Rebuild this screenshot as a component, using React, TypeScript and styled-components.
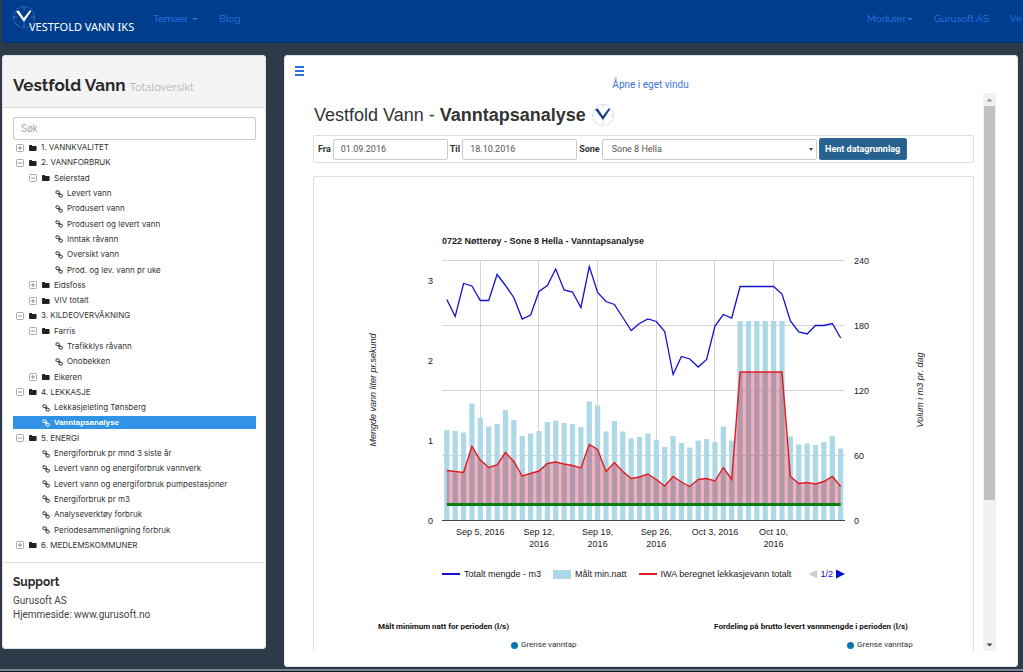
import React from "react";
import styled, { createGlobalStyle } from "styled-components";

const raleway = `Raleway, Lato, "Open Sans", sans-serif`;
const roboto = `Roboto, "Liberation Sans", sans-serif`;
const arial = `"Liberation Sans", Arial, sans-serif`;
const inter = `Inter, "Liberation Sans", sans-serif`;

const GlobalStyle = createGlobalStyle`
  *, *::before, *::after { box-sizing: border-box; }
  body { margin: 0; background: #2c3a4a; color: #333; font-family: ${roboto}; overflow: hidden; }
  a { text-decoration: none; }
  h1, h2, p, ul { margin: 0; padding: 0; }
`;

/* ---------- page frame ---------- */

const Page = styled.div`
  display: flex;
  flex-direction: column;
  height: 100vh;
  min-height: 660px;
  border-bottom: 1px solid #10161d;
`;

const Navbar = styled.header`
  flex: none;
  display: flex;
  align-items: flex-start;
  justify-content: space-between;
  height: 43px;
  margin-left: 2px;
  padding-left: 10px;
  background: #003d8c;
  border-bottom: 1px solid #00306f;
  border-bottom-left-radius: 3px;
  overflow: hidden;
  white-space: nowrap;
`;

const NavGroup = styled.nav`
  display: flex;
  align-items: flex-start;
  gap: 21px;
  padding-top: 11px;
`;

const NavStart = styled.div`
  display: flex;
  align-items: flex-start;
  gap: 19px;
`;

const NavEnd = styled(NavGroup)`
  width: 156px;
  flex: none;
`;

const NavLink = styled.a`
  display: flex;
  flex: none;
  align-items: center;
  gap: 4px;
  font: 10px/16px ${raleway};
  color: #2d79ee;
`;

const Caret = styled.span<{ $tight?: boolean }>`
  border: 3px solid transparent;
  border-top: 2px solid currentColor;
  border-bottom: 0;
  margin-left: ${(p) => (p.$tight ? -3 : 0)}px;
`;

const Brand = styled.a`
  display: flex;
  align-items: flex-start;
  padding-top: 5px;
  color: #fff;
`;

const BrandName = styled.span`
  margin: 14px 0 0 -7px;
  font: 11px/16px "Noto Sans", "Open Sans", sans-serif;
`;

const Columns = styled.div`
  flex: 1;
  min-height: 0;
  display: flex;
  align-items: flex-start;
  gap: 18px;
  padding: 12px 5px 2px 2px;
`;

const FootLine = styled.div`
  flex: none;
  height: 2px;
  background: #7c8796;
`;

/* ---------- sidebar ---------- */

const Sidebar = styled.aside`
  flex: none;
  width: 264px;
  background: #fff;
  border: 1px solid #e2e4e7;
  border-radius: 3px;
  padding-bottom: 26px;
`;

const SideHeader = styled.div`
  padding: 17px 10px 10px;
  background: #f4f4f4;
  border-bottom: 1px solid #ddd;
`;

const SideTitle = styled.h1`
  height: 24px;
  font: 700 17px/24px ${raleway};
  color: #2b2b2b;
`;

const Muted = styled.small`
  font-size: 11px;
  line-height: 16px;
  font-weight: 400;
  color: #b3b3b3;
`;

const SideBody = styled.div`
  padding: 9px 9px 9px 10px;
  border-bottom: 1px solid #ddd;
`;

const Search = styled.input`
  display: block;
  width: 100%;
  height: 23px;
  padding: 0 7px;
  border: 1px solid #ccc;
  border-radius: 2px;
  font: 10px/16px ${roboto};
  color: #555;
  &::placeholder { color: #aaa; opacity: 1; }
`;

const Tree = styled.ul`
  display: grid;
  grid-auto-rows: 1fr;
  height: 413px;
  list-style: none;
`;

const TreeItem = styled.li<{ $level: number; $active?: boolean }>`
  align-self: center;
  display: flex;
  align-items: center;
  height: 13px;
  padding-left: ${(p) => 3 + p.$level * 13}px;
  background: ${(p) => (p.$active ? "#3193e6" : "transparent")};
  font: ${(p) => (p.$active ? 700 : 400)} 8px/13px ${(p) => (p.$active ? arial : inter)};
  color: ${(p) => (p.$active ? "#fff" : "#333")};
  white-space: nowrap;
`;

const Toggle = styled.button`
  flex: none;
  width: 13px;
  height: 8px;
  padding: 0;
  border: 0;
  background: none;
  display: flex;
`;

const Blank = styled.span`
  flex: none;
  width: 13px;
`;

const IconCell = styled.span`
  flex: none;
  width: 12px;
  display: flex;
`;

const TreeLink = styled.a`
  color: inherit;
`;

const Support = styled.section`
  padding: 11px 10px 0;
  font: 10px/14px ${roboto};
  color: #444;
`;

const SupportTitle = styled.h2`
  margin-bottom: 4px;
  font: 700 12px/16px ${raleway};
  color: #2b2b2b;
`;

/* ---------- main panel ---------- */

const Main = styled.main`
  flex: 1;
  min-width: 0;
  align-self: stretch;
  display: flex;
  flex-direction: column;
  background: #fff;
  border: 1px solid #e2e4e7;
  border-radius: 3px;
  padding: 10px 21px 15px 10px;
`;

const MenuButton = styled.button`
  flex: none;
  width: 9px;
  height: 10px;
  padding: 0;
  border: 0;
  border-top: 2px solid #2a70dc;
  border-bottom: 2px solid #2a70dc;
  background: linear-gradient(#2a70dc, #2a70dc) center / 100% 2px no-repeat;
`;

const OpenLink = styled.a`
  align-self: center;
  margin: 2px 0 1px 10px;
  font: 10px/14px ${roboto};
  color: #3b73d9;
`;

const Frame = styled.div`
  flex: 1;
  min-height: 0;
  display: flex;
  gap: 9px;
  padding-left: 18px;
`;

const Report = styled.div`
  flex: 1;
  min-width: 0;
  overflow: hidden;
`;

const ReportTitle = styled.h2`
  display: flex;
  align-items: center;
  gap: 5px;
  height: 42px;
  padding: 2px 0 0 1px;
  font: 400 18px/24px ${arial};
  color: #333;
  white-space: nowrap;
`;

const FilterBar = styled.form`
  display: flex;
  align-items: center;
  gap: 2px;
  height: 28px;
  padding: 0 4px;
  border: 1px solid #ddd;
  border-radius: 2px;
`;

const FilterLabel = styled.label`
  flex: none;
  font: 700 9px/12px ${roboto};
  color: #333;
`;

const DateInput = styled.input`
  width: 115px;
  height: 21px;
  padding: 0 7px;
  border: 1px solid #ccc;
  border-radius: 2px;
  font: 9px/12px ${roboto};
  color: #555;
`;

const SelectBox = styled.div`
  width: 215px;
  display: grid;
  align-items: center;
  justify-items: end;
  & > * { grid-area: 1 / 1; }
`;

const ZoneSelect = styled.select`
  appearance: none;
  width: 100%;
  height: 21px;
  padding: 0 9px;
  border: 1px solid #ccc;
  border-radius: 2px;
  background: #fff;
  font: 9px/12px ${roboto};
  color: #555;
`;

const SelectArrow = styled.span`
  margin-right: 4px;
  border: 2px solid transparent;
  border-top: 3px solid #444;
  border-bottom: 0;
  pointer-events: none;
`;

const SubmitButton = styled.button`
  flex: none;
  width: 88px;
  height: 22px;
  padding: 0;
  border: 1px solid #2e6da4;
  border-radius: 2px;
  background: #286090;
  font: 700 9px/12px ${roboto};
  color: #fff;
`;

const ChartCard = styled.section`
  margin-top: 13px;
  border: 1px solid #ddd;
  border-radius: 2px;
  height: 600px;
`;

const ChartColumn = styled.div`
  width: 565px;
  margin: 0 auto;
`;

const Legend = styled.div`
  display: flex;
  align-items: center;
  gap: 12px;
  height: 12px;
  margin-top: 18px;
  padding: 0 81px;
  font: 9px/12px ${arial};
  color: #222;
  white-space: nowrap;
`;

const LegendEntry = styled.span`
  display: flex;
  align-items: center;
  gap: 4px;
`;

const Swatch = styled.span<{ $color: string; $solid?: boolean }>`
  flex: none;
  width: 18px;
  height: ${(p) => (p.$solid ? 9 : 2)}px;
  background: ${(p) => p.$color};
`;

const Pager = styled.span`
  display: flex;
  align-items: center;
  gap: 3px;
  margin-left: auto;
  color: #0011cc;
`;

const PagerButton = styled.button<{ $next?: boolean }>`
  width: 9px;
  height: 9px;
  padding: 0;
  border: 0;
  background: ${(p) => (p.$next ? "#0011cc" : "#ccc")};
  clip-path: ${(p) => (p.$next ? "polygon(0 0, 100% 50%, 0 100%)" : "polygon(100% 0, 0 50%, 100% 100%)")};
`;

const SmallCharts = styled.div`
  display: grid;
  grid-template-columns: 51% 49%;
  margin-top: 41px;
  white-space: nowrap;
`;

const SmallChart = styled.div`
  padding-left: 64px;
`;

const SmallTitle = styled.div`
  font: 700 8px/12px ${roboto};
  color: #111;
`;

const SmallLegend = styled.div`
  display: flex;
  align-items: center;
  gap: 3px;
  margin: 6px 0 0 133px;
  font: 8px/12px ${roboto};
  color: #333;
`;

const Dot = styled.span`
  width: 7px;
  height: 7px;
  border-radius: 50%;
  background: #0b75b5;
`;

const ScrollTrack = styled.div`
  flex: none;
  width: 13px;
  display: flex;
  flex-direction: column;
  align-items: center;
  background: #f1f1f1;
`;

const ScrollButton = styled.button`
  width: 13px;
  height: 13px;
  padding: 0;
  border: 0;
  background: none;
  display: flex;
  align-items: center;
  justify-content: center;
`;

const ScrollRail = styled.div`
  flex: 1;
  width: 11px;
`;

const ScrollThumb = styled.div`
  height: 74%;
  background: #c1c1c1;
`;

const SvgText = styled.text<{ $weight?: number; $italic?: boolean }>`
  font: ${(p) => (p.$italic ? "italic" : "normal")} ${(p) => p.$weight ?? 400} 9px ${arial};
  fill: #222;
`;

/* ---------- icons ---------- */

const ToggleIcon = ({ open }: { open: boolean }) => (
  <svg width="8" height="8" viewBox="0 0 8 8" fill="none" stroke="#999">
    <rect x="0.5" y="0.5" width="7" height="7" rx="1" stroke="#aaa" />
    <path d={open ? "M2 4H6" : "M2 4H6M4 2V6"} strokeWidth="0.8" stroke="#777" />
  </svg>
);

const FolderIcon = () => (
  <svg width="8" height="8" viewBox="0 0 8 8" fill="#222">
    <path d="M0 1.8Q0 1 .8 1H2.4Q3.2 1 3.2 2H6.8Q7.6 2 7.6 2.8V6.2Q7.6 7 6.8 7H.8Q0 7 0 6.2Z" />
  </svg>
);

const LinkIcon = () => (
  <svg width="8" height="8" viewBox="0 0 8 8" fill="none" stroke="currentColor" strokeWidth="0.9">
    <rect x="0.9" y="0.9" width="3.4" height="2.7" rx="1.3" transform="rotate(25 2.6 2.2)" />
    <rect x="4" y="4.3" width="3.4" height="2.7" rx="1.3" transform="rotate(25 5.7 5.6)" />
    <path d="M2.8 3.2Q3.2 4.6 4.6 4.4M4.2 2.8Q5.2 3.2 5 4.4" />
  </svg>
);

const Compass = ({ ring, mark }: { ring: string; mark: string }) => (
  <svg width="24" height="24" viewBox="0 0 24 24" fill="none" style={{ flex: "none" }}>
    <circle cx="12" cy="12" r="10.5" stroke={ring} strokeWidth="0.7" strokeDasharray="4 1" />
    <path d="M12 1V6M12 17V23M1 12H5M19 12H23M19 19L20 20M4 20L5 19" stroke={ring} strokeWidth="0.8" />
    <path d="M4 6.2L6.8 5.4L11.8 13L17.8 5.2L19.4 6L12 17Z" fill={mark} />
  </svg>
);

/* ---------- data ---------- */

type Node = { label: string; level: number; open?: boolean; active?: boolean };

const nodes: Node[] = [
  { label: "1. VANNKVALITET", level: 0, open: false },
  { label: "2. VANNFORBRUK", level: 0, open: true },
  { label: "Seierstad", level: 1, open: true },
  { label: "Levert vann", level: 2 },
  { label: "Produsert vann", level: 2 },
  { label: "Produsert og levert vann", level: 2 },
  { label: "Inntak råvann", level: 2 },
  { label: "Oversikt vann", level: 2 },
  { label: "Prod. og lev. vann pr uke", level: 2 },
  { label: "Eidsfoss", level: 1, open: false },
  { label: "VIV totalt", level: 1, open: false },
  { label: "3. KILDEOVERVÅKNING", level: 0, open: true },
  { label: "Farris", level: 1, open: true },
  { label: "Trafikklys råvann", level: 2 },
  { label: "Onobekken", level: 2 },
  { label: "Eikeren", level: 1, open: false },
  { label: "4. LEKKASJE", level: 0, open: true },
  { label: "Lekkasjeleting Tønsberg", level: 1 },
  { label: "Vanntapsanalyse", level: 1, active: true },
  { label: "5. ENERGI", level: 0, open: true },
  { label: "Energiforbruk pr mnd 3 siste år", level: 1 },
  { label: "Levert vann og energiforbruk vannverk", level: 1 },
  { label: "Levert vann og energiforbruk pumpestasjoner", level: 1 },
  { label: "Energiforbruk pr m3", level: 1 },
  { label: "Analyseverktøy forbruk", level: 1 },
  { label: "Periodesammenligning forbruk", level: 1 },
  { label: "6. MEDLEMSKOMMUNER", level: 0, open: false },
];

// One value per day from 1 September, as height above the axis (260 = 240 m3).
const total = [
  221, 204, 237, 234.5, 220, 220, 246, 235, 223, 201.5, 205.5, 229, 235, 251.5, 230.5, 228.5, 213, 254,
  228, 219, 216, 203, 190, 197, 201.5, 199, 189, 146, 164, 161.5, 153.5, 161, 194.5, 206, 202.5,
  234, 234, 234, 234, 234, 226.5, 199.5, 188.5, 186.5, 195, 195, 197, 182.5,
];
const night = [
  90.5, 89.5, 88, 117, 102.5, 94, 96.5, 110.5, 100.5, 84.5, 87, 89.5, 98.5, 100, 97.5, 96.5, 93.5, 119,
  115, 89, 99.5, 89, 82, 83.5, 87, 80.5, 73.5, 84.5, 77.5, 73, 80, 81.5, 78.5, 94, 80,
  199.5, 199.5, 199.5, 199.5, 199.5, 199.5, 84, 76, 77, 75.5, 78.5, 84.5, 72,
];
const leak = [
  50, 49, 48, 74, 60.5, 53, 55.5, 68, 59, 44.5, 47, 49.5, 57, 58.5, 56.5, 55, 52.5, 76,
  71, 49, 58, 49, 42, 43.5, 46.5, 41, 34.5, 44, 38.5, 34, 41, 42, 39.5, 53, 41,
  148.5, 148.5, 148.5, 148.5, 148.5, 148.5, 44, 37, 38, 36.5, 39, 44, 34,
];

const axisY = 343.5;
const limitY = 327.5;
const dayX = (i: number) => 85.8 + i * 8.38;
const points = (v: number[]) => v.map((h, i) => `${dayX(i).toFixed(1)},${axisY - h}`).join(" ");

const weeks: [number, string[]][] = [
  [4, ["Sep 5, 2016"]],
  [11, ["Sep 12,", "2016"]],
  [18, ["Sep 19,", "2016"]],
  [25, ["Sep 26,", "2016"]],
  [32, ["Oct 3, 2016"]],
  [39, ["Oct 10,", "2016"]],
];

const WaterChart = () => (
  <svg width="565" height="373" viewBox="0 0 565 373" style={{ display: "block" }}>
    <SvgText x="81" y="67" $weight={700}>0722 Nøtterøy - Sone 8 Hella - Vanntapsanalyse</SvgText>
    <g stroke="#d4d4d4">
      {[0, 65, 130, 195].map((h) => (
        <path key={h} d={`M81 ${83.5 + h}H484`} />
      ))}
      {weeks.map(([day]) => (
        <path key={day} d={`M${Math.floor(dayX(day)) + 0.5} 83V343`} />
      ))}
    </g>
    <g fill="#add8e6">
      {night.map((h, i) => (
        <rect key={i} x={dayX(i) - 2.6} y={axisY - h} width="5.2" height={h} />
      ))}
    </g>
    <path d="M81 343.5H484" stroke="#444" />
    <polygon points={`${dayX(0)},${limitY} ${points(leak)} ${dayX(47)},${limitY}`} fill="#c8102e" fillOpacity="0.32" />
    <polyline points={points(leak)} fill="none" stroke="#e01b22" strokeWidth="1.4" />
    <path d={`M${dayX(0)} ${limitY}H${dayX(47)}`} stroke="#0a7d12" strokeWidth="3" />
    <polyline points={points(total)} fill="none" stroke="#1410d0" strokeWidth="1.3" />
    {[0, 1, 2, 3].map((n) => (
      <SvgText key={n} x="72" y={347 - n * 80} textAnchor="end">{n}</SvgText>
    ))}
    {[0, 60, 120, 180, 240].map((n, i) => (
      <SvgText key={n} x="493" y={347 - i * 65}>{n}</SvgText>
    ))}
    {weeks.map(([day, lines]) =>
      lines.map((line, i) => (
        <SvgText key={day + line} x={dayX(day)} y={358 + i * 12} textAnchor="middle">{line}</SvgText>
      ))
    )}
    <SvgText transform="translate(15 213) rotate(-90)" textAnchor="middle" $italic>Mengde vann liter pr.sekund</SvgText>
    <SvgText transform="translate(562 213) rotate(-90)" textAnchor="middle" $italic>Volum i m3 pr. dag</SvgText>
  </svg>
);

export default function App() {
  return (
    <Page>
      <GlobalStyle />
      <Navbar>
        <NavStart>
          <Brand href="#">
            <Compass ring="#4f82c8" mark="#fff" />
            <BrandName>VESTFOLD VANN IKS</BrandName>
          </Brand>
          <NavGroup>
            <NavLink href="#">Temaer <Caret /></NavLink>
            <NavLink href="#">Blog</NavLink>
          </NavGroup>
        </NavStart>
        <NavEnd>
          <NavLink href="#">Moduler<Caret $tight /></NavLink>
          <NavLink href="#">Gurusoft AS</NavLink>
          <NavLink href="#">Ve</NavLink>
        </NavEnd>
      </Navbar>

      <Columns>
        <Sidebar>
          <SideHeader>
            <SideTitle>Vestfold Vann <Muted>Totaloversikt</Muted></SideTitle>
          </SideHeader>
          <SideBody>
            <Search type="text" placeholder="Søk" aria-label="Søk" />
            <Tree>
              {nodes.map((n) => (
                <TreeItem key={n.label} $level={n.level} $active={n.active}>
                  {n.open === undefined ? (
                    <Blank />
                  ) : (
                    <Toggle type="button" aria-label={n.label} aria-expanded={n.open}>
                      <ToggleIcon open={n.open} />
                    </Toggle>
                  )}
                  <IconCell>{n.open === undefined ? <LinkIcon /> : <FolderIcon />}</IconCell>
                  <TreeLink href="#">{n.label}</TreeLink>
                </TreeItem>
              ))}
            </Tree>
          </SideBody>
          <Support>
            <SupportTitle>Support</SupportTitle>
            <p>Gurusoft AS</p>
            <p>Hjemmeside: www.gurusoft.no</p>
          </Support>
        </Sidebar>

        <Main>
          <MenuButton type="button" aria-label="Meny" />
          <OpenLink href="#">Åpne i eget vindu</OpenLink>
          <Frame>
            <Report>
              <ReportTitle>
                <span>Vestfold Vann - <b>Vanntapsanalyse</b></span>
                <Compass ring="#c3d5e8" mark="#123f86" />
              </ReportTitle>
              <FilterBar>
                <FilterLabel htmlFor="from">Fra</FilterLabel>
                <DateInput id="from" type="text" defaultValue="01.09.2016" />
                <FilterLabel htmlFor="to">Til</FilterLabel>
                <DateInput id="to" type="text" defaultValue="18.10.2016" />
                <FilterLabel htmlFor="zone">Sone</FilterLabel>
                <SelectBox>
                  <ZoneSelect id="zone" defaultValue="8">
                    <option value="8">Sone 8 Hella</option>
                  </ZoneSelect>
                  <SelectArrow />
                </SelectBox>
                <SubmitButton type="button">Hent datagrunnlag</SubmitButton>
              </FilterBar>
              <ChartCard>
                <ChartColumn>
                  <WaterChart />
                  <Legend>
                    <LegendEntry><Swatch $color="#1410d0" />Totalt mengde - m3</LegendEntry>
                    <LegendEntry><Swatch $color="#add8e6" $solid />Målt min.natt</LegendEntry>
                    <LegendEntry><Swatch $color="#e01b22" />IWA beregnet lekkasjevann totalt</LegendEntry>
                    <Pager>
                      <PagerButton type="button" aria-label="Forrige" />
                      1/2
                      <PagerButton type="button" aria-label="Neste" $next />
                    </Pager>
                  </Legend>
                </ChartColumn>
                <SmallCharts>
                  <SmallChart>
                    <SmallTitle>Målt minimum natt for perioden (l/s)</SmallTitle>
                    <SmallLegend><Dot />Grense vanntap</SmallLegend>
                  </SmallChart>
                  <SmallChart>
                    <SmallTitle>Fordeling på brutto levert vannmengde i perioden (l/s)</SmallTitle>
                    <SmallLegend><Dot />Grense vanntap</SmallLegend>
                  </SmallChart>
                </SmallCharts>
              </ChartCard>
            </Report>
            <ScrollTrack>
              <ScrollButton type="button" aria-label="Rull opp">
                <svg width="7" height="4" viewBox="0 0 7 4"><path d="M0.5 3.5L3.5 0.5L6.5 3.5Z" fill="#999" /></svg>
              </ScrollButton>
              <ScrollRail><ScrollThumb /></ScrollRail>
              <ScrollButton type="button" aria-label="Rull ned">
                <svg width="7" height="4" viewBox="0 0 7 4"><path d="M0.5 0.5L3.5 3.5L6.5 0.5Z" fill="#444" /></svg>
              </ScrollButton>
            </ScrollTrack>
          </Frame>
        </Main>
      </Columns>
      <FootLine />
    </Page>
  );
}
